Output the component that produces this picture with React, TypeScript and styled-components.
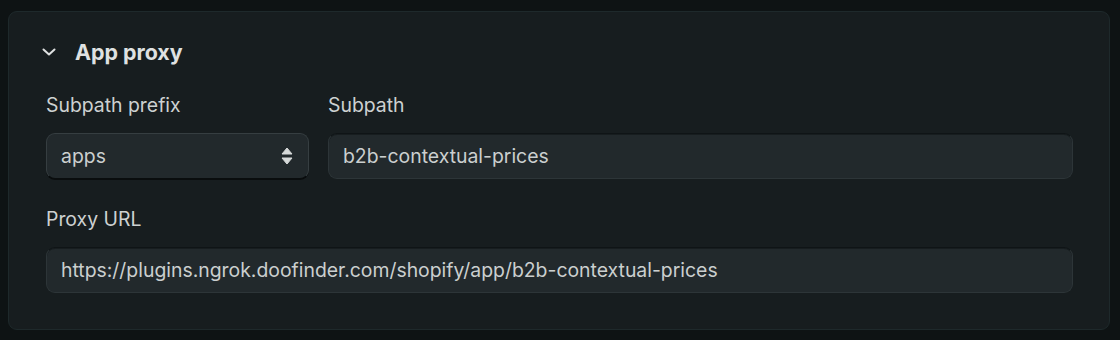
import * as React from 'react'
import styled, { createGlobalStyle } from 'styled-components'

const GlobalStyle = createGlobalStyle`
  html, body {
    margin: 0;
    background: #0e1314;
  }
  body {
    font-family: Inter, 'Noto Sans', sans-serif;
    -webkit-font-smoothing: antialiased;
  }
`

const Page = styled.div`
  padding: 11px 10px 10px 8px;
`

const Card = styled.section`
  background: #171d1f;
  border: 1px solid #1e292b;
  border-radius: 9px;
  padding: 26px 36px 36px 37px;
  height: 319px;
  box-sizing: border-box;
`

const Header = styled.div`
  display: flex;
  align-items: center;
  gap: 18px;
  height: 28px;
  margin-left: -5px;
  margin-bottom: 27px;
`

const Title = styled.h2`
  margin: 0;
  font-size: 21.4px;
  font-weight: 700;
  color: #dfe1e1;
`

const Row = styled.div`
  display: grid;
  grid-template-columns: 263px 1fr;
  gap: 19px;
  margin-bottom: 28px;
`

const Field = styled.div`
  display: flex;
  flex-direction: column;
`

const Label = styled.label`
  font-size: 19.4px;
  line-height: 24px;
  color: #cdd1d1;
  margin-bottom: 16px;
`

const Input = styled.div`
  height: 46px;
  box-sizing: border-box;
  border-radius: 9px;
  background: #22292c;
  border: 1px solid #2d3538;
  border-top-color: #0f1416;
  box-shadow: inset 0 1px 0 #171d1f;
  padding: 0 14px;
  display: flex;
  align-items: center;
  font-size: 19.4px;
  color: #cbcfcf;
`

const Select = styled(Input)`
  justify-content: space-between;
  border: 1px solid #363e41;
  border-bottom-color: #0a0d0e;
  box-shadow: 0 1px 0 #0a0d0e;
`

const Chevron = () => (
  <svg width="16" height="16" viewBox="0 0 16 16" fill="none">
    <path d="M2.5 5.5 L8 10.5 L13.5 5.5" stroke="#dfe1e1" strokeWidth="2" strokeLinecap="round" strokeLinejoin="round" />
  </svg>
)

const UpDown = () => (
  <svg width="14" height="20" viewBox="0 0 14 20">
    <path d="M7 2 L12 8 H2 Z" fill="#d6d9d9" strokeLinejoin="round" stroke="#d6d9d9" strokeWidth="1" />
    <path d="M7 18 L12 12 H2 Z" fill="#d6d9d9" strokeLinejoin="round" stroke="#d6d9d9" strokeWidth="1" />
  </svg>
)

const App = () => {
  return (
    <Page>
      <GlobalStyle />
      <Card>
        <Header>
          <Chevron />
          <Title>App proxy</Title>
        </Header>
        <Row>
          <Field>
            <Label>Subpath prefix</Label>
            <Select>
              <span>apps</span>
              <UpDown />
            </Select>
          </Field>
          <Field>
            <Label>Subpath</Label>
            <Input>b2b-contextual-prices</Input>
          </Field>
        </Row>
        <Field>
          <Label>Proxy URL</Label>
          <Input>https://plugins.ngrok.doofinder.com/shopify/app/b2b-contextual-prices</Input>
        </Field>
      </Card>
    </Page>
  )
}

export default App
